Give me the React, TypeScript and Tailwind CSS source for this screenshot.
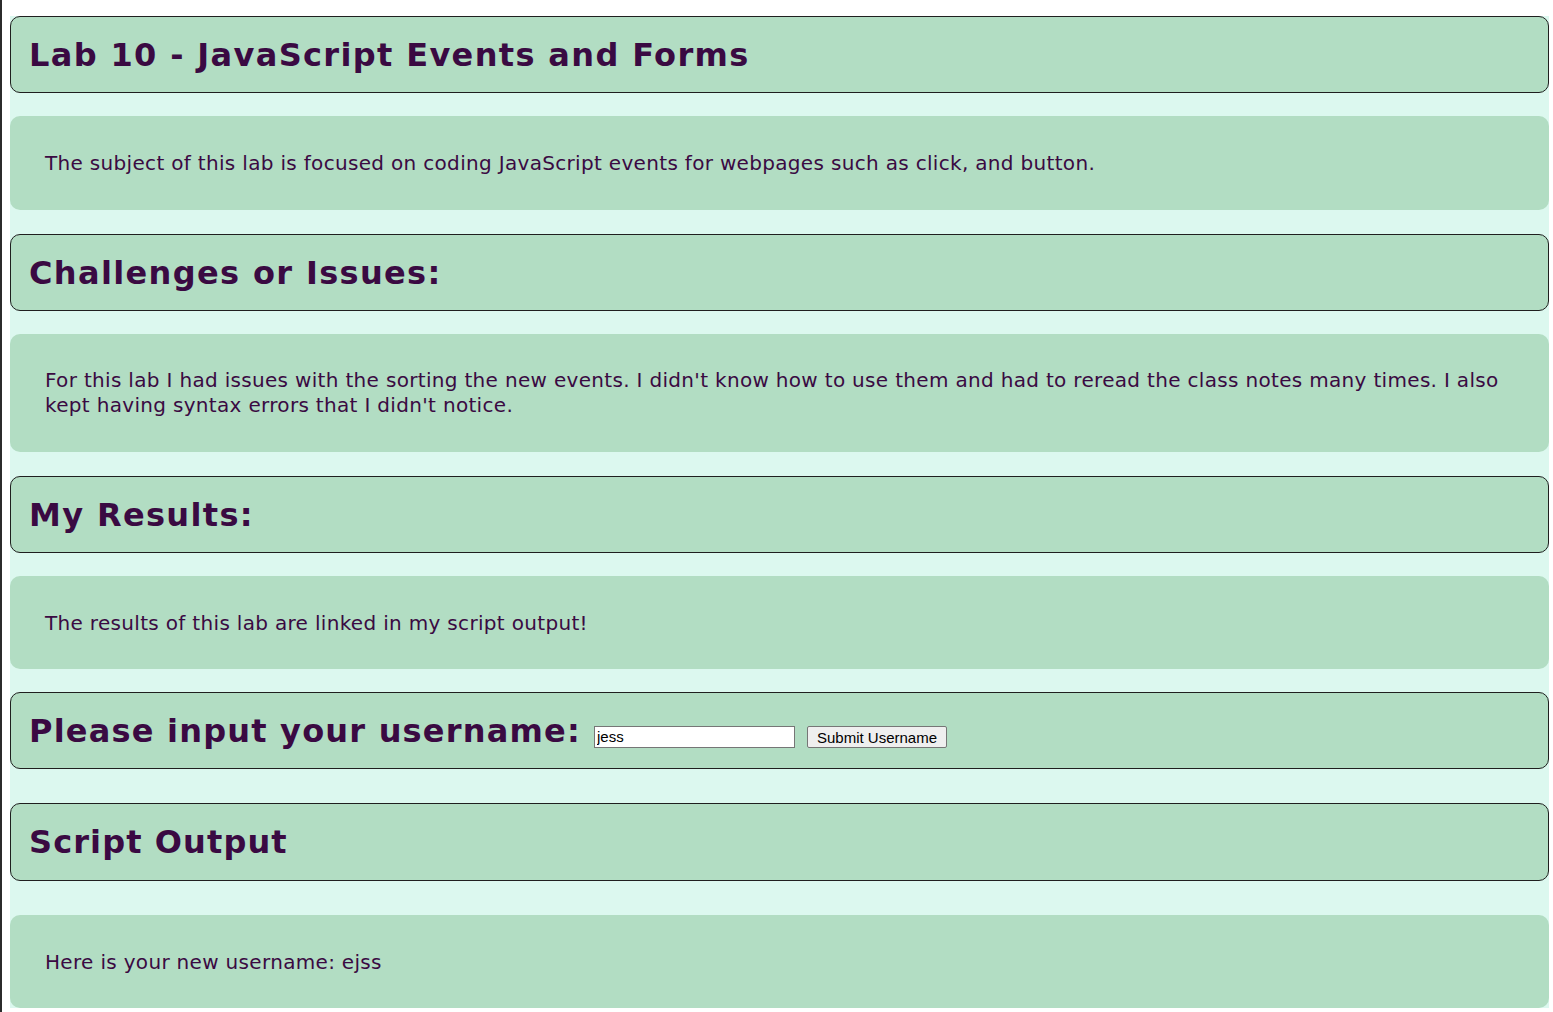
export default function App() {
  const head = "h-[77px] flex items-center px-[18px] rounded-[10px] border border-[#1f1f1f] bg-[#b2ddc3]"
  const body = "flex items-center px-[35px] rounded-[10px] bg-[#b2ddc3]"
  const h = "text-[32px] font-bold tracking-[1.35px]"
  const t = "text-[20px] tracking-[0.32px]"
  return (
    <div className="min-h-screen bg-white border-l-2 border-[#2b2b2b] pl-2 pr-1 pt-4 text-[#3a0a42]" style={{ fontFamily: '"DejaVu Sans", Verdana, sans-serif' }}>
      <div className="flex flex-col bg-[#dcf8ef]">
        {/* Intro */}
        <div className={head}>
          <h1 className={h}>Lab 10 - JavaScript Events and Forms</h1>
        </div>
        <div className={`${body} h-[94px] mt-[23px]`}>
          <p className={t}>The subject of this lab is focused on coding JavaScript events for webpages such as click, and button.</p>
        </div>

        {/* Challenges */}
        <div className={`${head} mt-[24px]`}>
          <h2 className={h}>Challenges or Issues:</h2>
        </div>
        <div className={`${body} h-[118px] mt-[23px]`}>
          <p className={`${t} leading-[25px]`}>
            For this lab I had issues with the sorting the new events. I didn't know how to use them and had to reread the class notes many times. I also kept having syntax errors that I didn't notice.
          </p>
        </div>

        {/* Results */}
        <div className={`${head} mt-[24px]`}>
          <h2 className={h}>My Results:</h2>
        </div>
        <div className={`${body} h-[93px] mt-[23px]`}>
          <p className={t}>The results of this lab are linked in my script output!</p>
        </div>

        {/* Form */}
        <div className={`${head} mt-[23px]`}>
          <h2 className="text-[32px] font-bold tracking-[1.2px]">Please input your username:</h2>
          <input
            defaultValue="jess"
            className="ml-[13px] mt-[13px] w-[201px] h-[22px] bg-white border border-[#767676] px-[2px] text-[15px] text-black"
            style={{ fontFamily: '"Liberation Sans", Arial, sans-serif' }}
          />
          <button
            className="ml-[12px] mt-[13px] h-[22px] px-[9px] bg-[#efefef] border border-[#767676] rounded-[2px] text-[15px] text-black"
            style={{ fontFamily: '"Liberation Sans", Arial, sans-serif' }}
          >
            Submit Username
          </button>
        </div>

        {/* Output */}
        <div className={`${head} mt-[34px] h-[78px]`}>
          <h2 className="text-[32px] font-bold tracking-[1.1px]">Script Output</h2>
        </div>
        <div className={`${body} h-[93px] mt-[34px]`}>
          <p className={t}>Here is your new username: ejss</p>
        </div>
      </div>
    </div>
  )
}
